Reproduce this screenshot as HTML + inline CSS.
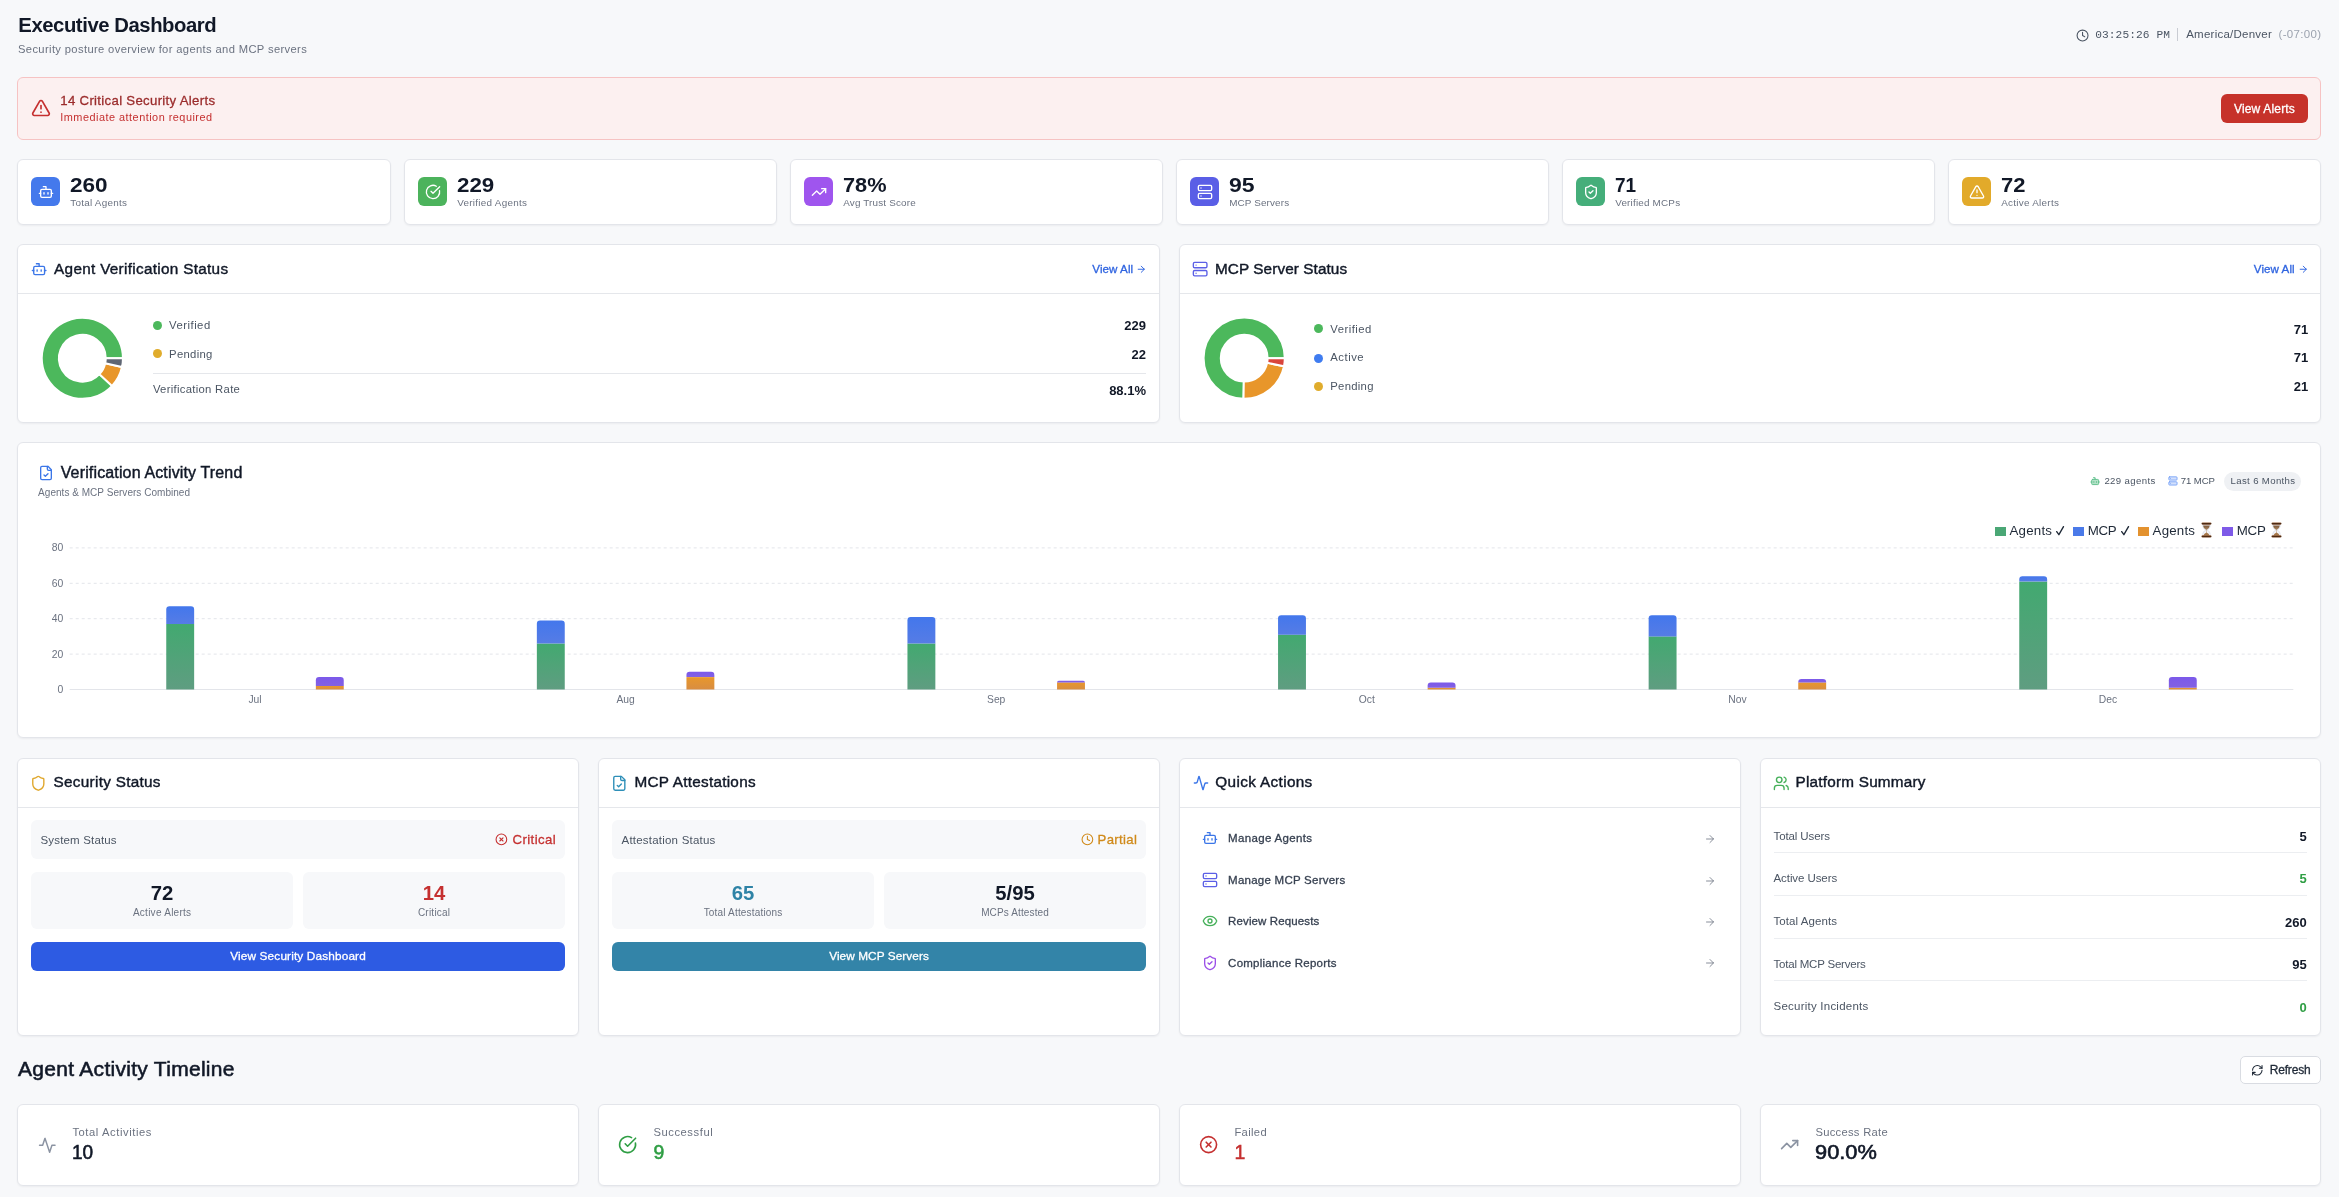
<!DOCTYPE html><html><head><meta charset="utf-8"><style>
*{margin:0;padding:0;box-sizing:border-box}
html,body{width:2339px;height:1197px;overflow:hidden;background:#f7f8fa;font-family:"Liberation Sans",sans-serif}
#root{position:absolute;left:0;top:0;width:2339px;height:1197px;will-change:transform}
.b{position:absolute}
.t{position:absolute;white-space:nowrap}
.ic{position:absolute;overflow:visible}
svg.abs{position:absolute;left:0;top:0}
</style></head><body><div id="root">
<span class="t" id="t0" style="left:18.30px;top:14.81px;font-size:20.3px;line-height:20.3px;font-weight:700;color:#111827;font-family:'Liberation Sans', sans-serif;letter-spacing:-0.437px;">Executive Dashboard</span>
<span class="t" id="t1" style="left:18.00px;top:44.32px;font-size:11.2px;line-height:11.2px;font-weight:400;color:#6b7280;font-family:'Liberation Sans', sans-serif;letter-spacing:0.363px;">Security posture overview for agents and MCP servers</span>
<svg class="ic" style="left:2075.60px;top:28.80px;width:13.1px;height:13.1px" viewBox="0 0 24 24" fill="none" stroke="#4b5563" stroke-width="2" stroke-linecap="round" stroke-linejoin="round"><circle cx="12" cy="12" r="10"/><polyline points="12 6 12 12 16 14"/></svg>
<span class="t" id="t2" style="left:2095.20px;top:29.62px;font-size:11.2px;line-height:11.2px;font-weight:400;color:#4b5563;font-family:'Liberation Mono', monospace;letter-spacing:0.092px;">03:25:26 PM</span>
<div class="b" style="left:2177.00px;top:28.30px;width:1.00px;height:13.00px;background:#c9ccd3"></div>
<span class="t" id="t3" style="left:2186.20px;top:29.36px;font-size:11.5px;line-height:11.5px;font-weight:400;color:#4b5563;font-family:'Liberation Sans', sans-serif;letter-spacing:0.242px;">America/Denver</span>
<span class="t" id="t4" style="left:2278.50px;top:29.36px;font-size:11.5px;line-height:11.5px;font-weight:400;color:#9ca3af;font-family:'Liberation Sans', sans-serif;letter-spacing:0.332px;">(-07:00)</span>
<div class="b" style="left:17.00px;top:77.00px;width:2304.00px;height:63.00px;background:#fcf0f0;border:1px solid #f6c3c3;border-radius:6px"></div>
<svg class="ic" style="left:30.60px;top:98.20px;width:20px;height:20px" viewBox="0 0 24 24" fill="none" stroke="#c53030" stroke-width="2" stroke-linecap="round" stroke-linejoin="round"><path d="m21.73 18-8-14a2 2 0 0 0-3.48 0l-8 14A2 2 0 0 0 4 21h16a2 2 0 0 0 1.73-3"/><path d="M12 9v4"/><path d="M12 17h.01"/></svg>
<span class="t" id="t5" style="left:60.30px;top:93.82px;font-size:13.2px;line-height:13.2px;font-weight:400;color:#9b2c2c;font-family:'Liberation Sans', sans-serif;letter-spacing:0.313px;-webkit-text-stroke:0.3px #9b2c2c;">14 Critical Security Alerts</span>
<span class="t" id="t6" style="left:60.30px;top:112.47px;font-size:10.9px;line-height:10.9px;font-weight:400;color:#c53030;font-family:'Liberation Sans', sans-serif;letter-spacing:0.486px;">Immediate attention required</span>
<div class="b" style="left:2221.00px;top:94.00px;width:87.00px;height:29.00px;background:#c6322a;border-radius:6px"></div>
<span class="t" id="t7" style="left:2264.40px;transform:translateX(-50%);top:102.74px;font-size:12.0px;line-height:12.0px;font-weight:400;color:#ffffff;font-family:'Liberation Sans', sans-serif;letter-spacing:0.170px;margin-left:0.085px;-webkit-text-stroke:0.3px #ffffff;">View Alerts</span>
<div class="b" style="left:17.00px;top:159.00px;width:374.00px;height:66.00px;background:#fff;border:1px solid #e3e5ea;border-radius:6px;box-shadow:0 1px 2px rgba(16,24,40,0.05);"></div>
<div class="b" style="left:31.00px;top:177.00px;width:29.00px;height:29.00px;background:#4479ec;border-radius:6px"></div>
<svg class="ic" style="left:37.50px;top:183.50px;width:16px;height:16px" viewBox="0 0 24 24" fill="none" stroke="#ffffff" stroke-width="2" stroke-linecap="round" stroke-linejoin="round"><path d="M12 8V4H8"/><rect width="16" height="12" x="4" y="8" rx="2"/><path d="M2 14h2"/><path d="M20 14h2"/><path d="M15 13v2"/><path d="M9 13v2"/></svg>
<span class="t" id="t8" style="left:70.20px;top:174.73px;font-size:20.4px;line-height:20.4px;font-weight:700;color:#111827;font-family:'Liberation Sans', sans-serif;transform:scaleX(1.1042);transform-origin:left center;">260</span>
<span class="t" id="t9" style="left:70.20px;top:198.42px;font-size:9.9px;line-height:9.9px;font-weight:400;color:#6b7280;font-family:'Liberation Sans', sans-serif;letter-spacing:0.271px;">Total Agents</span>
<div class="b" style="left:404.00px;top:159.00px;width:373.00px;height:66.00px;background:#fff;border:1px solid #e3e5ea;border-radius:6px;box-shadow:0 1px 2px rgba(16,24,40,0.05);"></div>
<div class="b" style="left:418.00px;top:177.00px;width:29.00px;height:29.00px;background:#4cb35c;border-radius:6px"></div>
<svg class="ic" style="left:424.50px;top:183.50px;width:16px;height:16px" viewBox="0 0 24 24" fill="none" stroke="#ffffff" stroke-width="2" stroke-linecap="round" stroke-linejoin="round"><path d="M21.801 10A10 10 0 1 1 17 3.335"/><path d="m9 11 3 3L22 4"/></svg>
<span class="t" id="t10" style="left:457.20px;top:174.73px;font-size:20.4px;line-height:20.4px;font-weight:700;color:#111827;font-family:'Liberation Sans', sans-serif;transform:scaleX(1.0950);transform-origin:left center;">229</span>
<span class="t" id="t11" style="left:457.20px;top:198.42px;font-size:9.9px;line-height:9.9px;font-weight:400;color:#6b7280;font-family:'Liberation Sans', sans-serif;letter-spacing:0.272px;">Verified Agents</span>
<div class="b" style="left:790.00px;top:159.00px;width:373.00px;height:66.00px;background:#fff;border:1px solid #e3e5ea;border-radius:6px;box-shadow:0 1px 2px rgba(16,24,40,0.05);"></div>
<div class="b" style="left:804.00px;top:177.00px;width:29.00px;height:29.00px;background:#9f55ee;border-radius:6px"></div>
<svg class="ic" style="left:810.50px;top:183.50px;width:16px;height:16px" viewBox="0 0 24 24" fill="none" stroke="#ffffff" stroke-width="2" stroke-linecap="round" stroke-linejoin="round"><polyline points="22 7 13.5 15.5 8.5 10.5 2 17"/><polyline points="16 7 22 7 22 13"/></svg>
<span class="t" id="t12" style="left:843.20px;top:174.73px;font-size:20.4px;line-height:20.4px;font-weight:700;color:#111827;font-family:'Liberation Sans', sans-serif;transform:scaleX(1.0664);transform-origin:left center;">78%</span>
<span class="t" id="t13" style="left:843.20px;top:198.42px;font-size:9.9px;line-height:9.9px;font-weight:400;color:#6b7280;font-family:'Liberation Sans', sans-serif;letter-spacing:0.172px;">Avg Trust Score</span>
<div class="b" style="left:1176.00px;top:159.00px;width:373.00px;height:66.00px;background:#fff;border:1px solid #e3e5ea;border-radius:6px;box-shadow:0 1px 2px rgba(16,24,40,0.05);"></div>
<div class="b" style="left:1190.00px;top:177.00px;width:29.00px;height:29.00px;background:#5a5ee6;border-radius:6px"></div>
<svg class="ic" style="left:1196.50px;top:183.50px;width:16px;height:16px" viewBox="0 0 24 24" fill="none" stroke="#ffffff" stroke-width="2" stroke-linecap="round" stroke-linejoin="round"><rect width="20" height="8" x="2" y="2" rx="2" ry="2"/><rect width="20" height="8" x="2" y="14" rx="2" ry="2"/><line x1="6" x2="6.01" y1="6" y2="6"/><line x1="6" x2="6.01" y1="18" y2="18"/></svg>
<span class="t" id="t14" style="left:1229.20px;top:174.73px;font-size:20.4px;line-height:20.4px;font-weight:700;color:#111827;font-family:'Liberation Sans', sans-serif;transform:scaleX(1.1289);transform-origin:left center;">95</span>
<span class="t" id="t15" style="left:1229.20px;top:198.42px;font-size:9.9px;line-height:9.9px;font-weight:400;color:#6b7280;font-family:'Liberation Sans', sans-serif;letter-spacing:0.135px;">MCP Servers</span>
<div class="b" style="left:1562.00px;top:159.00px;width:373.00px;height:66.00px;background:#fff;border:1px solid #e3e5ea;border-radius:6px;box-shadow:0 1px 2px rgba(16,24,40,0.05);"></div>
<div class="b" style="left:1576.00px;top:177.00px;width:29.00px;height:29.00px;background:#45ae7a;border-radius:6px"></div>
<svg class="ic" style="left:1582.50px;top:183.50px;width:16px;height:16px" viewBox="0 0 24 24" fill="none" stroke="#ffffff" stroke-width="2" stroke-linecap="round" stroke-linejoin="round"><path d="M20 13c0 5-3.5 7.5-7.66 8.95a1 1 0 0 1-.67-.01C7.5 20.5 4 18 4 13V6a1 1 0 0 1 1-1c2 0 4.5-1.2 6.24-2.72a1.17 1.17 0 0 1 1.520 0C14.51 3.810 17 5 19 5a1 1 0 0 1 1 1z"/><path d="m9 12 2 2 4-4"/></svg>
<span class="t" id="t16" style="left:1615.20px;top:174.73px;font-size:20.4px;line-height:20.4px;font-weight:700;color:#111827;font-family:'Liberation Sans', sans-serif;transform:scaleX(0.9313);transform-origin:left center;">71</span>
<span class="t" id="t17" style="left:1615.20px;top:198.42px;font-size:9.9px;line-height:9.9px;font-weight:400;color:#6b7280;font-family:'Liberation Sans', sans-serif;letter-spacing:0.194px;">Verified MCPs</span>
<div class="b" style="left:1948.00px;top:159.00px;width:373.00px;height:66.00px;background:#fff;border:1px solid #e3e5ea;border-radius:6px;box-shadow:0 1px 2px rgba(16,24,40,0.05);"></div>
<div class="b" style="left:1962.00px;top:177.00px;width:29.00px;height:29.00px;background:#e2aa2a;border-radius:6px"></div>
<svg class="ic" style="left:1968.50px;top:183.50px;width:16px;height:16px" viewBox="0 0 24 24" fill="none" stroke="#ffffff" stroke-width="2" stroke-linecap="round" stroke-linejoin="round"><path d="m21.73 18-8-14a2 2 0 0 0-3.48 0l-8 14A2 2 0 0 0 4 21h16a2 2 0 0 0 1.73-3"/><path d="M12 9v4"/><path d="M12 17h.01"/></svg>
<span class="t" id="t18" style="left:2001.20px;top:174.73px;font-size:20.4px;line-height:20.4px;font-weight:700;color:#111827;font-family:'Liberation Sans', sans-serif;transform:scaleX(1.0772);transform-origin:left center;">72</span>
<span class="t" id="t19" style="left:2001.20px;top:198.42px;font-size:9.9px;line-height:9.9px;font-weight:400;color:#6b7280;font-family:'Liberation Sans', sans-serif;letter-spacing:0.279px;">Active Alerts</span>
<div class="b" style="left:17.00px;top:244.00px;width:1143.00px;height:179.00px;background:#fff;border:1px solid #e3e5ea;border-radius:6px;box-shadow:0 1px 2px rgba(16,24,40,0.05);"></div>
<div class="b" style="left:18.00px;top:293.00px;width:1141.00px;height:1.00px;background:#e5e7eb"></div>
<div class="b" style="left:1179.00px;top:244.00px;width:1142.00px;height:179.00px;background:#fff;border:1px solid #e3e5ea;border-radius:6px;box-shadow:0 1px 2px rgba(16,24,40,0.05);"></div>
<div class="b" style="left:1180.00px;top:293.00px;width:1140.00px;height:1.00px;background:#e5e7eb"></div>
<svg class="ic" style="left:30.60px;top:261.00px;width:16.3px;height:16.3px" viewBox="0 0 24 24" fill="none" stroke="#3b76e8" stroke-width="2" stroke-linecap="round" stroke-linejoin="round"><path d="M12 8V4H8"/><rect width="16" height="12" x="4" y="8" rx="2"/><path d="M2 14h2"/><path d="M20 14h2"/><path d="M15 13v2"/><path d="M9 13v2"/></svg>
<span class="t" id="t20" style="left:54.10px;top:261.15px;font-size:15.3px;line-height:15.3px;font-weight:400;color:#111827;font-family:'Liberation Sans', sans-serif;letter-spacing:0.304px;-webkit-text-stroke:0.41px #111827;">Agent Verification Status</span>
<span class="t" id="t21" style="left:1092.30px;top:263.28px;font-size:11.6px;line-height:11.6px;font-weight:400;color:#2f64e0;font-family:'Liberation Sans', sans-serif;letter-spacing:0.060px;-webkit-text-stroke:0.3px #2f64e0;">View All</span>
<svg class="ic" style="left:1136.00px;top:263.50px;width:10.5px;height:10.5px" viewBox="0 0 24 24" fill="none" stroke="#2f64e0" stroke-width="2.2" stroke-linecap="round" stroke-linejoin="round"><path d="M5 12h14"/><path d="m12 5 7 7-7 7"/></svg>
<svg class="abs" width="2339" height="1197" style="position:absolute;left:0;top:0"><path d="M122.950,358.250 A40.6,40.6 0 1 0 112.080,385.899 L99.485,374.186 A23.4,23.4 0 1 1 105.750,358.250 Z" fill="#4cb85c" stroke="#fff" stroke-width="2.0"/><path d="M112.080,385.899 A40.6,40.6 0 0 0 121.994,367.011 L105.199,363.299 A23.4,23.4 0 0 1 99.485,374.186 Z" fill="#e8962a" stroke="#fff" stroke-width="2.0"/><path d="M121.994,367.011 A40.6,40.6 0 0 0 122.950,358.250 L105.750,358.250 A23.4,23.4 0 0 1 105.199,363.299 Z" fill="#5f6673" stroke="#fff" stroke-width="2.0"/></svg>
<div class="b" style="left:153.00px;top:320.90px;width:9.00px;height:9.00px;background:#4cb85c;border-radius:50%"></div>
<span class="t" id="t22" style="left:169.10px;top:319.93px;font-size:11.3px;line-height:11.3px;font-weight:400;color:#4b5563;font-family:'Liberation Sans', sans-serif;letter-spacing:0.486px;">Verified</span>
<span class="t" id="t23" style="right:1193.00px;top:318.79px;font-size:13.0px;line-height:13.0px;font-weight:700;color:#111827;font-family:'Liberation Sans', sans-serif;">229</span>
<div class="b" style="left:153.00px;top:349.40px;width:9.00px;height:9.00px;background:#e0ac2c;border-radius:50%"></div>
<span class="t" id="t24" style="left:169.10px;top:348.73px;font-size:11.3px;line-height:11.3px;font-weight:400;color:#4b5563;font-family:'Liberation Sans', sans-serif;letter-spacing:0.287px;">Pending</span>
<span class="t" id="t25" style="right:1193.00px;top:347.59px;font-size:13.0px;line-height:13.0px;font-weight:700;color:#111827;font-family:'Liberation Sans', sans-serif;">22</span>
<div class="b" style="left:153.00px;top:373.00px;width:992.80px;height:1.00px;background:#e5e7eb"></div>
<span class="t" id="t26" style="left:152.90px;top:384.33px;font-size:11.3px;line-height:11.3px;font-weight:400;color:#4b5563;font-family:'Liberation Sans', sans-serif;letter-spacing:0.295px;">Verification Rate</span>
<span class="t" id="t27" style="right:1193.00px;top:383.99px;font-size:13.0px;line-height:13.0px;font-weight:700;color:#111827;font-family:'Liberation Sans', sans-serif;">88.1%</span>
<svg class="ic" style="left:1191.90px;top:260.60px;width:16.3px;height:16.3px" viewBox="0 0 24 24" fill="none" stroke="#5b5fe6" stroke-width="2" stroke-linecap="round" stroke-linejoin="round"><rect width="20" height="8" x="2" y="2" rx="2" ry="2"/><rect width="20" height="8" x="2" y="14" rx="2" ry="2"/><line x1="6" x2="6.01" y1="6" y2="6"/><line x1="6" x2="6.01" y1="18" y2="18"/></svg>
<span class="t" id="t28" style="left:1215.00px;top:261.15px;font-size:15.3px;line-height:15.3px;font-weight:400;color:#111827;font-family:'Liberation Sans', sans-serif;letter-spacing:0.089px;-webkit-text-stroke:0.41px #111827;">MCP Server Status</span>
<span class="t" id="t29" style="left:2253.80px;top:263.28px;font-size:11.6px;line-height:11.6px;font-weight:400;color:#2f64e0;font-family:'Liberation Sans', sans-serif;letter-spacing:0.060px;-webkit-text-stroke:0.3px #2f64e0;">View All</span>
<svg class="ic" style="left:2297.50px;top:263.50px;width:10.5px;height:10.5px" viewBox="0 0 24 24" fill="none" stroke="#2f64e0" stroke-width="2.2" stroke-linecap="round" stroke-linejoin="round"><path d="M5 12h14"/><path d="m12 5 7 7-7 7"/></svg>
<svg class="abs" width="2339" height="1197" style="position:absolute;left:0;top:0"><path d="M1284.800,358.200 A40.6,40.6 0 1 0 1243.529,398.794 L1243.813,381.597 A23.4,23.4 0 1 1 1267.600,358.200 Z" fill="#4cb85c" stroke="#fff" stroke-width="2.0"/><path d="M1243.529,398.794 A40.6,40.6 0 0 0 1284.003,366.203 L1267.141,362.813 A23.4,23.4 0 0 1 1243.813,381.597 Z" fill="#e8962a" stroke="#fff" stroke-width="2.0"/><path d="M1284.003,366.203 A40.6,40.6 0 0 0 1284.800,358.200 L1267.600,358.200 A23.4,23.4 0 0 1 1267.141,362.813 Z" fill="#d9443b" stroke="#fff" stroke-width="2.0"/></svg>
<div class="b" style="left:1314.20px;top:324.20px;width:9.00px;height:9.00px;background:#4cb85c;border-radius:50%"></div>
<span class="t" id="t30" style="left:1330.30px;top:323.53px;font-size:11.3px;line-height:11.3px;font-weight:400;color:#4b5563;font-family:'Liberation Sans', sans-serif;letter-spacing:0.486px;">Verified</span>
<span class="t" id="t31" style="right:30.70px;top:322.69px;font-size:13.0px;line-height:13.0px;font-weight:700;color:#111827;font-family:'Liberation Sans', sans-serif;">71</span>
<div class="b" style="left:1314.20px;top:353.50px;width:9.00px;height:9.00px;background:#3f7cf0;border-radius:50%"></div>
<span class="t" id="t32" style="left:1330.30px;top:351.63px;font-size:11.3px;line-height:11.3px;font-weight:400;color:#4b5563;font-family:'Liberation Sans', sans-serif;letter-spacing:0.505px;">Active</span>
<span class="t" id="t33" style="right:30.70px;top:350.79px;font-size:13.0px;line-height:13.0px;font-weight:700;color:#111827;font-family:'Liberation Sans', sans-serif;">71</span>
<div class="b" style="left:1314.20px;top:382.40px;width:9.00px;height:9.00px;background:#e0ac2c;border-radius:50%"></div>
<span class="t" id="t34" style="left:1330.30px;top:380.63px;font-size:11.3px;line-height:11.3px;font-weight:400;color:#4b5563;font-family:'Liberation Sans', sans-serif;letter-spacing:0.287px;">Pending</span>
<span class="t" id="t35" style="right:30.70px;top:379.79px;font-size:13.0px;line-height:13.0px;font-weight:700;color:#111827;font-family:'Liberation Sans', sans-serif;">21</span>
<div class="b" style="left:17.00px;top:442.00px;width:2304.00px;height:296.00px;background:#fff;border:1px solid #e3e5ea;border-radius:6px;box-shadow:0 1px 2px rgba(16,24,40,0.05);"></div>
<svg class="ic" style="left:37.80px;top:464.90px;width:16px;height:16px" viewBox="0 0 24 24" fill="none" stroke="#3b76e8" stroke-width="2" stroke-linecap="round" stroke-linejoin="round"><path d="M15 2H6a2 2 0 0 0-2 2v16a2 2 0 0 0 2 2h12a2 2 0 0 0 2-2V7Z"/><path d="M14 2v4a2 2 0 0 0 2 2h4"/><path d="m9 15 2 2 4-4"/></svg>
<span class="t" id="t36" style="left:60.70px;top:464.75px;font-size:16.0px;line-height:16.0px;font-weight:400;color:#111827;font-family:'Liberation Sans', sans-serif;letter-spacing:0.145px;-webkit-text-stroke:0.43px #111827;">Verification Activity Trend</span>
<span class="t" id="t37" style="left:38.10px;top:488.33px;font-size:10.0px;line-height:10.0px;font-weight:400;color:#6b7280;font-family:'Liberation Sans', sans-serif;letter-spacing:0.032px;">Agents &amp; MCP Servers Combined</span>
<svg class="ic" style="left:2090.30px;top:476.30px;width:10.3px;height:10.3px" viewBox="0 0 24 24" fill="#b4e2c8" stroke="#5fbf8b" stroke-width="2.2" stroke-linecap="round" stroke-linejoin="round"><path d="M12 8V4H8"/><rect width="16" height="12" x="4" y="8" rx="2"/><path d="M2 14h2"/><path d="M20 14h2"/><path d="M15 13v2"/><path d="M9 13v2"/></svg>
<span class="t" id="t38" style="left:2104.40px;top:476.27px;font-size:9.6px;line-height:9.6px;font-weight:400;color:#4b5563;font-family:'Liberation Sans', sans-serif;letter-spacing:0.388px;">229 agents</span>
<svg class="ic" style="left:2167.60px;top:476.30px;width:9.9px;height:9.9px" viewBox="0 0 24 24" fill="#d3e0fc" stroke="#6e9cf6" stroke-width="2" stroke-linecap="round" stroke-linejoin="round"><rect width="20" height="8" x="2" y="2" rx="2" ry="2"/><rect width="20" height="8" x="2" y="14" rx="2" ry="2"/><line x1="6" x2="6.01" y1="6" y2="6"/><line x1="6" x2="6.01" y1="18" y2="18"/></svg>
<span class="t" id="t39" style="left:2180.80px;top:476.27px;font-size:9.6px;line-height:9.6px;font-weight:400;color:#4b5563;font-family:'Liberation Sans', sans-serif;letter-spacing:-0.117px;">71 MCP</span>
<div class="b" style="left:2224.00px;top:472.10px;width:76.70px;height:18.70px;background:#eff1f4;border-radius:9.5px"></div>
<span class="t" id="t40" style="left:2230.60px;top:476.27px;font-size:9.6px;line-height:9.6px;font-weight:400;color:#4b5563;font-family:'Liberation Sans', sans-serif;letter-spacing:0.351px;">Last 6 Months</span>
<div class="b" style="left:1995.00px;top:527.20px;width:11.20px;height:8.50px;background:#4aa775"></div>
<span class="t" id="t41" style="left:2009.40px;top:523.74px;font-size:13.3px;line-height:13.3px;font-weight:400;color:#1f2937;font-family:'Liberation Sans', sans-serif;letter-spacing:0.245px;">Agents</span>
<svg class="ic" style="left:2055.90px;top:525.60px;width:8px;height:9.5px" viewBox="0 0 8 9.5"><path d="M0.7 5.6 L2.9 8.7 L7.5 0.6" fill="none" stroke="#1f2937" stroke-width="1.35" stroke-linecap="round" stroke-linejoin="round"/></svg>
<div class="b" style="left:2073.00px;top:527.20px;width:11.20px;height:8.50px;background:#4a7ae9"></div>
<span class="t" id="t42" style="left:2087.70px;top:523.74px;font-size:13.3px;line-height:13.3px;font-weight:400;color:#1f2937;font-family:'Liberation Sans', sans-serif;letter-spacing:-0.266px;">MCP</span>
<svg class="ic" style="left:2120.90px;top:525.60px;width:8px;height:9.5px" viewBox="0 0 8 9.5"><path d="M0.7 5.6 L2.9 8.7 L7.5 0.6" fill="none" stroke="#1f2937" stroke-width="1.35" stroke-linecap="round" stroke-linejoin="round"/></svg>
<div class="b" style="left:2138.00px;top:527.20px;width:11.20px;height:8.50px;background:#e3922f"></div>
<span class="t" id="t43" style="left:2152.60px;top:523.74px;font-size:13.3px;line-height:13.3px;font-weight:400;color:#1f2937;font-family:'Liberation Sans', sans-serif;letter-spacing:0.185px;">Agents</span>
<svg class="ic" style="left:2200.50px;top:522.00px;width:11px;height:16px" viewBox="0 0 11 16"><defs><linearGradient id="hgCap" x1="0" y1="0" x2="0" y2="1"><stop offset="0" stop-color="#9a6238"/><stop offset="0.5" stop-color="#4a2710"/><stop offset="1" stop-color="#7a4522"/></linearGradient><linearGradient id="hgSand" x1="0" y1="0" x2="0" y2="1"><stop offset="0" stop-color="#7d5a3c"/><stop offset="1" stop-color="#b08a62"/></linearGradient></defs><path d="M1.8 2.2 L9.2 2.2 L9.2 4.2 Q9.2 6.6 5.9 8 Q9.2 9.4 9.2 11.8 L9.2 13.8 L1.8 13.8 L1.8 11.8 Q1.8 9.4 5.1 8 Q1.8 6.6 1.8 4.2 Z" fill="#f3f5fa" stroke="#c9cfdc" stroke-width="0.5"/><path d="M2.2 3.6 L8.8 3.6 Q8.8 6.2 5.5 7.9 Q2.2 6.2 2.2 3.6 Z" fill="url(#hgSand)"/><path d="M5.5 7.9 L5.5 12" stroke="#b89876" stroke-width="0.5"/><path d="M2.4 13.8 L8.6 13.8 Q8 11.6 5.5 10.6 Q3 11.6 2.4 13.8 Z" fill="#a6784a"/><rect x="0.5" y="0.4" width="10" height="2.3" rx="1.15" fill="url(#hgCap)"/><rect x="0.5" y="13.3" width="10" height="2.3" rx="1.15" fill="url(#hgCap)"/></svg>
<div class="b" style="left:2222.00px;top:527.20px;width:11.20px;height:8.50px;background:#7e5ae8"></div>
<span class="t" id="t44" style="left:2236.80px;top:523.74px;font-size:13.3px;line-height:13.3px;font-weight:400;color:#1f2937;font-family:'Liberation Sans', sans-serif;letter-spacing:-0.266px;">MCP</span>
<svg class="ic" style="left:2271.20px;top:522.00px;width:11px;height:16px" viewBox="0 0 11 16"><defs><linearGradient id="hgCap" x1="0" y1="0" x2="0" y2="1"><stop offset="0" stop-color="#9a6238"/><stop offset="0.5" stop-color="#4a2710"/><stop offset="1" stop-color="#7a4522"/></linearGradient><linearGradient id="hgSand" x1="0" y1="0" x2="0" y2="1"><stop offset="0" stop-color="#7d5a3c"/><stop offset="1" stop-color="#b08a62"/></linearGradient></defs><path d="M1.8 2.2 L9.2 2.2 L9.2 4.2 Q9.2 6.6 5.9 8 Q9.2 9.4 9.2 11.8 L9.2 13.8 L1.8 13.8 L1.8 11.8 Q1.8 9.4 5.1 8 Q1.8 6.6 1.8 4.2 Z" fill="#f3f5fa" stroke="#c9cfdc" stroke-width="0.5"/><path d="M2.2 3.6 L8.8 3.6 Q8.8 6.2 5.5 7.9 Q2.2 6.2 2.2 3.6 Z" fill="url(#hgSand)"/><path d="M5.5 7.9 L5.5 12" stroke="#b89876" stroke-width="0.5"/><path d="M2.4 13.8 L8.6 13.8 Q8 11.6 5.5 10.6 Q3 11.6 2.4 13.8 Z" fill="#a6784a"/><rect x="0.5" y="0.4" width="10" height="2.3" rx="1.15" fill="url(#hgCap)"/><rect x="0.5" y="13.3" width="10" height="2.3" rx="1.15" fill="url(#hgCap)"/></svg>
<span class="t" id="t45" style="right:2275.70px;top:685.09px;font-size:10.4px;line-height:10.4px;font-weight:400;color:#6b7280;font-family:'Liberation Sans', sans-serif;">0</span>
<span class="t" id="t46" style="right:2275.70px;top:649.69px;font-size:10.4px;line-height:10.4px;font-weight:400;color:#6b7280;font-family:'Liberation Sans', sans-serif;">20</span>
<span class="t" id="t47" style="right:2275.70px;top:614.29px;font-size:10.4px;line-height:10.4px;font-weight:400;color:#6b7280;font-family:'Liberation Sans', sans-serif;">40</span>
<span class="t" id="t48" style="right:2275.70px;top:578.89px;font-size:10.4px;line-height:10.4px;font-weight:400;color:#6b7280;font-family:'Liberation Sans', sans-serif;">60</span>
<span class="t" id="t49" style="right:2275.70px;top:543.49px;font-size:10.4px;line-height:10.4px;font-weight:400;color:#6b7280;font-family:'Liberation Sans', sans-serif;">80</span>
<span class="t" id="t50" style="left:255.00px;transform:translateX(-50%);top:695.28px;font-size:10.3px;line-height:10.3px;font-weight:400;color:#6b7280;font-family:'Liberation Sans', sans-serif;">Jul</span>
<span class="t" id="t51" style="left:625.60px;transform:translateX(-50%);top:695.28px;font-size:10.3px;line-height:10.3px;font-weight:400;color:#6b7280;font-family:'Liberation Sans', sans-serif;">Aug</span>
<span class="t" id="t52" style="left:996.20px;transform:translateX(-50%);top:695.28px;font-size:10.3px;line-height:10.3px;font-weight:400;color:#6b7280;font-family:'Liberation Sans', sans-serif;">Sep</span>
<span class="t" id="t53" style="left:1366.80px;transform:translateX(-50%);top:695.28px;font-size:10.3px;line-height:10.3px;font-weight:400;color:#6b7280;font-family:'Liberation Sans', sans-serif;">Oct</span>
<span class="t" id="t54" style="left:1737.40px;transform:translateX(-50%);top:695.28px;font-size:10.3px;line-height:10.3px;font-weight:400;color:#6b7280;font-family:'Liberation Sans', sans-serif;">Nov</span>
<span class="t" id="t55" style="left:2108.00px;transform:translateX(-50%);top:695.28px;font-size:10.3px;line-height:10.3px;font-weight:400;color:#6b7280;font-family:'Liberation Sans', sans-serif;">Dec</span>
<svg class="abs" width="2339" height="1197" style="position:absolute;left:0;top:0"><defs><linearGradient id="gG" x1="0" y1="0" x2="0" y2="1"><stop offset="0" stop-color="#42a970"/><stop offset="1" stop-color="#5f9d81"/></linearGradient><linearGradient id="gB" x1="0" y1="0" x2="0" y2="1"><stop offset="0" stop-color="#4377ec"/><stop offset="1" stop-color="#567ce5"/></linearGradient><linearGradient id="gO" x1="0" y1="0" x2="0" y2="1"><stop offset="0" stop-color="#e8972b"/><stop offset="1" stop-color="#d88d42"/></linearGradient><linearGradient id="gP" x1="0" y1="0" x2="0" y2="1"><stop offset="0" stop-color="#7b59ea"/><stop offset="1" stop-color="#8361e2"/></linearGradient></defs><line x1="69.7" y1="654.10" x2="2293.3" y2="654.10" stroke="#e3e5ea" stroke-width="1" stroke-dasharray="3 3"/><line x1="69.7" y1="618.70" x2="2293.3" y2="618.70" stroke="#e3e5ea" stroke-width="1" stroke-dasharray="3 3"/><line x1="69.7" y1="583.30" x2="2293.3" y2="583.30" stroke="#e3e5ea" stroke-width="1" stroke-dasharray="3 3"/><line x1="69.7" y1="547.90" x2="2293.3" y2="547.90" stroke="#e3e5ea" stroke-width="1" stroke-dasharray="3 3"/><line x1="69.7" y1="689.50" x2="2293.3" y2="689.50" stroke="#e3e5ea" stroke-width="1"/><rect x="166.25" y="624.01" width="27.9" height="65.49" fill="url(#gG)"/><path d="M166.25,624.01 L166.25,609.51 Q166.25,606.31 169.45,606.31 L190.95,606.31 Q194.15,606.31 194.15,609.51 L194.15,624.01 Z" fill="url(#gB)"/><rect x="315.85" y="685.96" width="27.9" height="3.54" fill="url(#gO)"/><path d="M315.85,685.96 L315.85,680.31 Q315.85,677.11 319.05,677.11 L340.55,677.11 Q343.75,677.11 343.75,680.31 L343.75,685.96 Z" fill="url(#gP)"/><rect x="536.85" y="643.48" width="27.9" height="46.02" fill="url(#gG)"/><path d="M536.85,643.48 L536.85,623.67 Q536.85,620.47 540.05,620.47 L561.55,620.47 Q564.75,620.47 564.75,623.67 L564.75,643.48 Z" fill="url(#gB)"/><rect x="686.45" y="677.11" width="27.9" height="12.39" fill="url(#gO)"/><path d="M686.45,677.11 L686.45,675.00 Q686.45,671.80 689.65,671.80 L711.15,671.80 Q714.35,671.80 714.35,675.00 L714.35,677.11 Z" fill="url(#gP)"/><rect x="907.45" y="643.48" width="27.9" height="46.02" fill="url(#gG)"/><path d="M907.45,643.48 L907.45,620.13 Q907.45,616.93 910.65,616.93 L932.15,616.93 Q935.35,616.93 935.35,620.13 L935.35,643.48 Z" fill="url(#gB)"/><rect x="1057.05" y="682.42" width="27.9" height="7.08" fill="url(#gO)"/><path d="M1057.05,682.42 L1057.05,682.42 Q1057.05,680.65 1058.82,680.65 L1083.18,680.65 Q1084.95,680.65 1084.95,682.42 L1084.95,682.42 Z" fill="url(#gP)"/><rect x="1278.05" y="634.63" width="27.9" height="54.87" fill="url(#gG)"/><path d="M1278.05,634.63 L1278.05,618.36 Q1278.05,615.16 1281.25,615.16 L1302.75,615.16 Q1305.95,615.16 1305.95,618.36 L1305.95,634.63 Z" fill="url(#gB)"/><rect x="1427.65" y="687.73" width="27.9" height="1.77" fill="url(#gO)"/><path d="M1427.65,687.73 L1427.65,685.62 Q1427.65,682.42 1430.85,682.42 L1452.35,682.42 Q1455.55,682.42 1455.55,685.62 L1455.55,687.73 Z" fill="url(#gP)"/><rect x="1648.65" y="636.40" width="27.9" height="53.10" fill="url(#gG)"/><path d="M1648.65,636.40 L1648.65,618.36 Q1648.65,615.16 1651.85,615.16 L1673.35,615.16 Q1676.55,615.16 1676.55,618.36 L1676.55,636.40 Z" fill="url(#gB)"/><rect x="1798.25" y="682.42" width="27.9" height="7.08" fill="url(#gO)"/><path d="M1798.25,682.42 L1798.25,682.08 Q1798.25,678.88 1801.45,678.88 L1822.95,678.88 Q1826.15,678.88 1826.15,682.08 L1826.15,682.42 Z" fill="url(#gP)"/><rect x="2019.25" y="581.53" width="27.9" height="107.97" fill="url(#gG)"/><path d="M2019.25,581.53 L2019.25,579.42 Q2019.25,576.22 2022.45,576.22 L2043.95,576.22 Q2047.15,576.22 2047.15,579.42 L2047.15,581.53 Z" fill="url(#gB)"/><rect x="2168.85" y="687.73" width="27.9" height="1.77" fill="url(#gO)"/><path d="M2168.85,687.73 L2168.85,680.31 Q2168.85,677.11 2172.05,677.11 L2193.55,677.11 Q2196.75,677.11 2196.75,680.31 L2196.75,687.73 Z" fill="url(#gP)"/></svg>
<div class="b" style="left:17.00px;top:758.00px;width:562.00px;height:278.00px;background:#fff;border:1px solid #e3e5ea;border-radius:6px;box-shadow:0 1px 2px rgba(16,24,40,0.05);"></div>
<div class="b" style="left:18.00px;top:807.00px;width:560.00px;height:1.00px;background:#e5e7eb"></div>
<div class="b" style="left:598.00px;top:758.00px;width:562.00px;height:278.00px;background:#fff;border:1px solid #e3e5ea;border-radius:6px;box-shadow:0 1px 2px rgba(16,24,40,0.05);"></div>
<div class="b" style="left:599.00px;top:807.00px;width:560.00px;height:1.00px;background:#e5e7eb"></div>
<div class="b" style="left:1179.00px;top:758.00px;width:562.00px;height:278.00px;background:#fff;border:1px solid #e3e5ea;border-radius:6px;box-shadow:0 1px 2px rgba(16,24,40,0.05);"></div>
<div class="b" style="left:1180.00px;top:807.00px;width:560.00px;height:1.00px;background:#e5e7eb"></div>
<div class="b" style="left:1760.00px;top:758.00px;width:561.00px;height:278.00px;background:#fff;border:1px solid #e3e5ea;border-radius:6px;box-shadow:0 1px 2px rgba(16,24,40,0.05);"></div>
<div class="b" style="left:1761.00px;top:807.00px;width:559.00px;height:1.00px;background:#e5e7eb"></div>
<svg class="ic" style="left:30.20px;top:774.80px;width:16.6px;height:16.6px" viewBox="0 0 24 24" fill="none" stroke="#e0a82e" stroke-width="2" stroke-linecap="round" stroke-linejoin="round"><path d="M20 13c0 5-3.5 7.5-7.66 8.95a1 1 0 0 1-.67-.01C7.5 20.5 4 18 4 13V6a1 1 0 0 1 1-1c2 0 4.5-1.2 6.24-2.72a1.17 1.17 0 0 1 1.52 0C14.51 3.81 17 5 19 5a1 1 0 0 1 1 1z"/></svg>
<span class="t" id="t56" style="left:53.60px;top:774.05px;font-size:15.3px;line-height:15.3px;font-weight:400;color:#111827;font-family:'Liberation Sans', sans-serif;letter-spacing:0.285px;-webkit-text-stroke:0.41px #111827;">Security Status</span>
<div class="b" style="left:31.00px;top:820.00px;width:534.00px;height:39.00px;background:#f7f8fa;border-radius:6px"></div>
<span class="t" id="t57" style="left:40.50px;top:834.66px;font-size:11.5px;line-height:11.5px;font-weight:400;color:#4b5563;font-family:'Liberation Sans', sans-serif;letter-spacing:0.164px;">System Status</span>
<svg class="ic" style="left:495.40px;top:832.77px;width:12.8px;height:12.8px" viewBox="0 0 24 24" fill="none" stroke="#c53030" stroke-width="2" stroke-linecap="round" stroke-linejoin="round"><circle cx="12" cy="12" r="10"/><path d="m15 9-6 6"/><path d="m9 9 6 6"/></svg>
<span class="t" id="t58" style="left:512.50px;top:833.02px;font-size:13.2px;line-height:13.2px;font-weight:400;color:#c53030;font-family:'Liberation Sans', sans-serif;letter-spacing:0.418px;-webkit-text-stroke:0.3px #c53030;">Critical</span>
<div class="b" style="left:31.00px;top:872.00px;width:262.00px;height:57.00px;background:#f7f8fa;border-radius:6px"></div>
<span class="t" id="t59" style="left:162.00px;transform:translateX(-50%);top:882.81px;font-size:20.3px;line-height:20.3px;font-weight:700;color:#111827;font-family:'Liberation Sans', sans-serif;">72</span>
<span class="t" id="t60" style="left:162.00px;transform:translateX(-50%);top:907.53px;font-size:10.0px;line-height:10.0px;font-weight:400;color:#6b7280;font-family:'Liberation Sans', sans-serif;letter-spacing:0.264px;margin-left:0.132px;">Active Alerts</span>
<div class="b" style="left:303.00px;top:872.00px;width:262.00px;height:57.00px;background:#f7f8fa;border-radius:6px"></div>
<span class="t" id="t61" style="left:434.00px;transform:translateX(-50%);top:882.81px;font-size:20.3px;line-height:20.3px;font-weight:700;color:#c53030;font-family:'Liberation Sans', sans-serif;">14</span>
<span class="t" id="t62" style="left:434.00px;transform:translateX(-50%);top:907.53px;font-size:10.0px;line-height:10.0px;font-weight:400;color:#6b7280;font-family:'Liberation Sans', sans-serif;letter-spacing:0.234px;margin-left:0.117px;">Critical</span>
<div class="b" style="left:31.00px;top:942.00px;width:534.00px;height:29.00px;background:#2d5be3;border-radius:6px"></div>
<span class="t" id="t63" style="left:298.00px;transform:translateX(-50%);top:951.01px;font-size:11.8px;line-height:11.8px;font-weight:400;color:#ffffff;font-family:'Liberation Sans', sans-serif;letter-spacing:0.149px;margin-left:0.074px;-webkit-text-stroke:0.3px #ffffff;">View Security Dashboard</span>
<svg class="ic" style="left:611.20px;top:774.80px;width:16.6px;height:16.6px" viewBox="0 0 24 24" fill="none" stroke="#2e8fb8" stroke-width="2" stroke-linecap="round" stroke-linejoin="round"><path d="M15 2H6a2 2 0 0 0-2 2v16a2 2 0 0 0 2 2h12a2 2 0 0 0 2-2V7Z"/><path d="M14 2v4a2 2 0 0 0 2 2h4"/><path d="m9 15 2 2 4-4"/></svg>
<span class="t" id="t64" style="left:634.50px;top:774.05px;font-size:15.3px;line-height:15.3px;font-weight:400;color:#111827;font-family:'Liberation Sans', sans-serif;letter-spacing:0.267px;-webkit-text-stroke:0.41px #111827;">MCP Attestations</span>
<div class="b" style="left:612.00px;top:820.00px;width:534.00px;height:39.00px;background:#f7f8fa;border-radius:6px"></div>
<span class="t" id="t65" style="left:621.50px;top:834.66px;font-size:11.5px;line-height:11.5px;font-weight:400;color:#4b5563;font-family:'Liberation Sans', sans-serif;letter-spacing:0.216px;">Attestation Status</span>
<svg class="ic" style="left:1081.00px;top:832.77px;width:12.8px;height:12.8px" viewBox="0 0 24 24" fill="none" stroke="#d08a1a" stroke-width="2" stroke-linecap="round" stroke-linejoin="round"><circle cx="12" cy="12" r="10"/><polyline points="12 6 12 12 16 14"/></svg>
<span class="t" id="t66" style="left:1097.60px;top:833.02px;font-size:13.2px;line-height:13.2px;font-weight:400;color:#d08a1a;font-family:'Liberation Sans', sans-serif;letter-spacing:0.322px;-webkit-text-stroke:0.3px #d08a1a;">Partial</span>
<div class="b" style="left:612.00px;top:872.00px;width:262.00px;height:57.00px;background:#f7f8fa;border-radius:6px"></div>
<span class="t" id="t67" style="left:743.00px;transform:translateX(-50%);top:882.81px;font-size:20.3px;line-height:20.3px;font-weight:700;color:#2e83a6;font-family:'Liberation Sans', sans-serif;">65</span>
<span class="t" id="t68" style="left:743.00px;transform:translateX(-50%);top:907.53px;font-size:10.0px;line-height:10.0px;font-weight:400;color:#6b7280;font-family:'Liberation Sans', sans-serif;letter-spacing:0.182px;margin-left:0.091px;">Total Attestations</span>
<div class="b" style="left:884.00px;top:872.00px;width:262.00px;height:57.00px;background:#f7f8fa;border-radius:6px"></div>
<span class="t" id="t69" style="left:1015.00px;transform:translateX(-50%);top:882.81px;font-size:20.3px;line-height:20.3px;font-weight:700;color:#111827;font-family:'Liberation Sans', sans-serif;">5/95</span>
<span class="t" id="t70" style="left:1015.00px;transform:translateX(-50%);top:907.53px;font-size:10.0px;line-height:10.0px;font-weight:400;color:#6b7280;font-family:'Liberation Sans', sans-serif;letter-spacing:0.130px;margin-left:0.065px;">MCPs Attested</span>
<div class="b" style="left:612.00px;top:942.00px;width:534.00px;height:29.00px;background:#3384a8;border-radius:6px"></div>
<span class="t" id="t71" style="left:879.00px;transform:translateX(-50%);top:951.01px;font-size:11.8px;line-height:11.8px;font-weight:400;color:#ffffff;font-family:'Liberation Sans', sans-serif;letter-spacing:0.071px;margin-left:0.035px;-webkit-text-stroke:0.3px #ffffff;">View MCP Servers</span>
<svg class="ic" style="left:1192.50px;top:774.60px;width:16.0px;height:16.0px" viewBox="0 0 24 24" fill="none" stroke="#3b76e8" stroke-width="2" stroke-linecap="round" stroke-linejoin="round"><path d="M22 12h-2.48a2 2 0 0 0-1.93 1.46l-2.35 8.36a.25.25 0 0 1-.48 0L9.24 2.18a.25.25 0 0 0-.48 0l-2.35 8.36A2 2 0 0 1 4.49 12H2"/></svg>
<span class="t" id="t72" style="left:1215.30px;top:774.05px;font-size:15.3px;line-height:15.3px;font-weight:400;color:#111827;font-family:'Liberation Sans', sans-serif;letter-spacing:0.358px;-webkit-text-stroke:0.41px #111827;">Quick Actions</span>
<svg class="ic" style="left:1202.20px;top:830.10px;width:16.0px;height:16.0px" viewBox="0 0 24 24" fill="none" stroke="#3b76e8" stroke-width="2" stroke-linecap="round" stroke-linejoin="round"><path d="M12 8V4H8"/><rect width="16" height="12" x="4" y="8" rx="2"/><path d="M2 14h2"/><path d="M20 14h2"/><path d="M15 13v2"/><path d="M9 13v2"/></svg>
<span class="t" id="t73" style="left:1228.10px;top:832.66px;font-size:11.5px;line-height:11.5px;font-weight:400;color:#374151;font-family:'Liberation Sans', sans-serif;letter-spacing:0.332px;-webkit-text-stroke:0.3px #374151;">Manage Agents</span>
<svg class="ic" style="left:1704.30px;top:832.50px;width:12.0px;height:12.0px" viewBox="0 0 24 24" fill="none" stroke="#6b7280" stroke-width="1.6" stroke-linecap="round" stroke-linejoin="round"><path d="M5 12h14"/><path d="m12 5 7 7-7 7"/></svg>
<svg class="ic" style="left:1202.20px;top:871.60px;width:16.0px;height:16.0px" viewBox="0 0 24 24" fill="none" stroke="#5b5fe6" stroke-width="2" stroke-linecap="round" stroke-linejoin="round"><rect width="20" height="8" x="2" y="2" rx="2" ry="2"/><rect width="20" height="8" x="2" y="14" rx="2" ry="2"/><line x1="6" x2="6.01" y1="6" y2="6"/><line x1="6" x2="6.01" y1="18" y2="18"/></svg>
<span class="t" id="t74" style="left:1228.10px;top:874.66px;font-size:11.5px;line-height:11.5px;font-weight:400;color:#374151;font-family:'Liberation Sans', sans-serif;letter-spacing:0.246px;-webkit-text-stroke:0.3px #374151;">Manage MCP Servers</span>
<svg class="ic" style="left:1704.30px;top:874.50px;width:12.0px;height:12.0px" viewBox="0 0 24 24" fill="none" stroke="#6b7280" stroke-width="1.6" stroke-linecap="round" stroke-linejoin="round"><path d="M5 12h14"/><path d="m12 5 7 7-7 7"/></svg>
<svg class="ic" style="left:1202.20px;top:913.10px;width:16.0px;height:16.0px" viewBox="0 0 24 24" fill="none" stroke="#46b05a" stroke-width="2" stroke-linecap="round" stroke-linejoin="round"><path d="M2.062 12.348a1 1 0 0 1 0-.696 10.75 10.75 0 0 1 19.876 0 1 1 0 0 1 0 .696 10.75 10.75 0 0 1-19.876 0"/><circle cx="12" cy="12" r="3"/></svg>
<span class="t" id="t75" style="left:1228.10px;top:915.66px;font-size:11.5px;line-height:11.5px;font-weight:400;color:#374151;font-family:'Liberation Sans', sans-serif;letter-spacing:0.116px;-webkit-text-stroke:0.3px #374151;">Review Requests</span>
<svg class="ic" style="left:1704.30px;top:915.50px;width:12.0px;height:12.0px" viewBox="0 0 24 24" fill="none" stroke="#6b7280" stroke-width="1.6" stroke-linecap="round" stroke-linejoin="round"><path d="M5 12h14"/><path d="m12 5 7 7-7 7"/></svg>
<svg class="ic" style="left:1202.20px;top:955.00px;width:16.0px;height:16.0px" viewBox="0 0 24 24" fill="none" stroke="#9b4fe8" stroke-width="2" stroke-linecap="round" stroke-linejoin="round"><path d="M20 13c0 5-3.5 7.5-7.66 8.95a1 1 0 0 1-.67-.01C7.5 20.5 4 18 4 13V6a1 1 0 0 1 1-1c2 0 4.5-1.2 6.24-2.72a1.17 1.17 0 0 1 1.520 0C14.51 3.810 17 5 19 5a1 1 0 0 1 1 1z"/><path d="m9 12 2 2 4-4"/></svg>
<span class="t" id="t76" style="left:1228.10px;top:957.56px;font-size:11.5px;line-height:11.5px;font-weight:400;color:#374151;font-family:'Liberation Sans', sans-serif;letter-spacing:0.248px;-webkit-text-stroke:0.3px #374151;">Compliance Reports</span>
<svg class="ic" style="left:1704.30px;top:957.40px;width:12.0px;height:12.0px" viewBox="0 0 24 24" fill="none" stroke="#6b7280" stroke-width="1.6" stroke-linecap="round" stroke-linejoin="round"><path d="M5 12h14"/><path d="m12 5 7 7-7 7"/></svg>
<svg class="ic" style="left:1773.20px;top:774.60px;width:16.6px;height:16.6px" viewBox="0 0 24 24" fill="none" stroke="#46b05a" stroke-width="2" stroke-linecap="round" stroke-linejoin="round"><path d="M16 21v-2a4 4 0 0 0-4-4H6a4 4 0 0 0-4 4v2"/><circle cx="9" cy="7" r="4"/><path d="M22 21v-2a4 4 0 0 0-3-3.87"/><path d="M16 3.13a4 4 0 0 1 0 7.75"/></svg>
<span class="t" id="t77" style="left:1795.60px;top:774.05px;font-size:15.3px;line-height:15.3px;font-weight:400;color:#111827;font-family:'Liberation Sans', sans-serif;letter-spacing:0.214px;-webkit-text-stroke:0.41px #111827;">Platform Summary</span>
<span class="t" id="t78" style="left:1773.50px;top:830.56px;font-size:11.5px;line-height:11.5px;font-weight:400;color:#4b5563;font-family:'Liberation Sans', sans-serif;letter-spacing:-0.103px;">Total Users</span>
<span class="t" id="t79" style="right:32.20px;top:829.69px;font-size:13.0px;line-height:13.0px;font-weight:700;color:#111827;font-family:'Liberation Sans', sans-serif;">5</span>
<div class="b" style="left:1773.50px;top:852.10px;width:533.30px;height:1.00px;background:#eceef1"></div>
<span class="t" id="t80" style="left:1773.50px;top:873.16px;font-size:11.5px;line-height:11.5px;font-weight:400;color:#4b5563;font-family:'Liberation Sans', sans-serif;letter-spacing:-0.077px;">Active Users</span>
<span class="t" id="t81" style="right:32.20px;top:872.29px;font-size:13.0px;line-height:13.0px;font-weight:700;color:#2f9e44;font-family:'Liberation Sans', sans-serif;">5</span>
<div class="b" style="left:1773.50px;top:894.70px;width:533.30px;height:1.00px;background:#eceef1"></div>
<span class="t" id="t82" style="left:1773.50px;top:916.46px;font-size:11.5px;line-height:11.5px;font-weight:400;color:#4b5563;font-family:'Liberation Sans', sans-serif;letter-spacing:0.086px;">Total Agents</span>
<span class="t" id="t83" style="right:32.20px;top:915.59px;font-size:13.0px;line-height:13.0px;font-weight:700;color:#111827;font-family:'Liberation Sans', sans-serif;">260</span>
<div class="b" style="left:1773.50px;top:938.00px;width:533.30px;height:1.00px;background:#eceef1"></div>
<span class="t" id="t84" style="left:1773.50px;top:958.56px;font-size:11.5px;line-height:11.5px;font-weight:400;color:#4b5563;font-family:'Liberation Sans', sans-serif;letter-spacing:-0.209px;">Total MCP Servers</span>
<span class="t" id="t85" style="right:32.20px;top:957.69px;font-size:13.0px;line-height:13.0px;font-weight:700;color:#111827;font-family:'Liberation Sans', sans-serif;">95</span>
<div class="b" style="left:1773.50px;top:980.10px;width:533.30px;height:1.00px;background:#eceef1"></div>
<span class="t" id="t86" style="left:1773.50px;top:1001.46px;font-size:11.5px;line-height:11.5px;font-weight:400;color:#4b5563;font-family:'Liberation Sans', sans-serif;letter-spacing:0.232px;">Security Incidents</span>
<span class="t" id="t87" style="right:32.20px;top:1000.59px;font-size:13.0px;line-height:13.0px;font-weight:700;color:#2f9e44;font-family:'Liberation Sans', sans-serif;">0</span>
<span class="t" id="t88" style="left:18.00px;top:1057.82px;font-size:21.0px;line-height:21.0px;font-weight:400;color:#111827;font-family:'Liberation Sans', sans-serif;letter-spacing:0.290px;-webkit-text-stroke:0.57px #111827;">Agent Activity Timeline</span>
<div class="b" style="left:2240.00px;top:1056.00px;width:81.00px;height:28.00px;background:#fff;border:1px solid #d9dce2;border-radius:5px"></div>
<svg class="ic" style="left:2250.60px;top:1063.60px;width:12.6px;height:12.6px" viewBox="0 0 24 24" fill="none" stroke="#1f2937" stroke-width="2" stroke-linecap="round" stroke-linejoin="round"><path d="M3 12a9 9 0 0 1 9-9 9.75 9.75 0 0 1 6.74 2.74L21 8"/><path d="M21 3v5h-5"/><path d="M21 12a9 9 0 0 1-9 9 9.75 9.75 0 0 1-6.74-2.74L3 16"/><path d="M8 16H3v5"/></svg>
<span class="t" id="t89" style="left:2269.80px;top:1064.34px;font-size:12.0px;line-height:12.0px;font-weight:400;color:#1f2937;font-family:'Liberation Sans', sans-serif;letter-spacing:-0.199px;-webkit-text-stroke:0.3px #1f2937;">Refresh</span>
<div class="b" style="left:17.00px;top:1104.00px;width:562.00px;height:82.00px;background:#fff;border:1px solid #e3e5ea;border-radius:6px;box-shadow:0 1px 2px rgba(16,24,40,0.05);"></div>
<svg class="ic" style="left:38.20px;top:1135.50px;width:18.6px;height:18.6px" viewBox="0 0 24 24" fill="none" stroke="#8b93a2" stroke-width="1.9" stroke-linecap="round" stroke-linejoin="round"><polyline points="22 12 18 12 15 21 9 3 6 12 2 12"/></svg>
<span class="t" id="t90" style="left:72.40px;top:1126.92px;font-size:11.2px;line-height:11.2px;font-weight:400;color:#6b7280;font-family:'Liberation Sans', sans-serif;letter-spacing:0.581px;">Total Activities</span>
<span class="t" id="t91" style="left:72.40px;top:1142.77px;font-size:19.4px;line-height:19.4px;font-weight:400;color:#111827;font-family:'Liberation Sans', sans-serif;transform:scaleX(0.9792);transform-origin:left center;-webkit-text-stroke:0.55px #111827;">10</span>
<div class="b" style="left:598.00px;top:1104.00px;width:562.00px;height:82.00px;background:#fff;border:1px solid #e3e5ea;border-radius:6px;box-shadow:0 1px 2px rgba(16,24,40,0.05);"></div>
<svg class="ic" style="left:617.60px;top:1135.00px;width:19.2px;height:19.2px" viewBox="0 0 24 24" fill="none" stroke="#2f9e44" stroke-width="2" stroke-linecap="round" stroke-linejoin="round"><path d="M21.801 10A10 10 0 1 1 17 3.335"/><path d="m9 11 3 3L22 4"/></svg>
<span class="t" id="t92" style="left:653.40px;top:1126.92px;font-size:11.2px;line-height:11.2px;font-weight:400;color:#6b7280;font-family:'Liberation Sans', sans-serif;letter-spacing:0.575px;">Successful</span>
<span class="t" id="t93" style="left:653.40px;top:1142.77px;font-size:19.4px;line-height:19.4px;font-weight:400;color:#2f9e44;font-family:'Liberation Sans', sans-serif;-webkit-text-stroke:0.55px #2f9e44;">9</span>
<div class="b" style="left:1179.00px;top:1104.00px;width:562.00px;height:82.00px;background:#fff;border:1px solid #e3e5ea;border-radius:6px;box-shadow:0 1px 2px rgba(16,24,40,0.05);"></div>
<svg class="ic" style="left:1198.60px;top:1135.00px;width:19.2px;height:19.2px" viewBox="0 0 24 24" fill="none" stroke="#c53030" stroke-width="2" stroke-linecap="round" stroke-linejoin="round"><circle cx="12" cy="12" r="10"/><path d="m15 9-6 6"/><path d="m9 9 6 6"/></svg>
<span class="t" id="t94" style="left:1234.40px;top:1126.92px;font-size:11.2px;line-height:11.2px;font-weight:400;color:#6b7280;font-family:'Liberation Sans', sans-serif;letter-spacing:0.360px;">Failed</span>
<span class="t" id="t95" style="left:1234.40px;top:1142.77px;font-size:19.4px;line-height:19.4px;font-weight:400;color:#c53030;font-family:'Liberation Sans', sans-serif;-webkit-text-stroke:0.55px #c53030;">1</span>
<div class="b" style="left:1760.00px;top:1104.00px;width:561.00px;height:82.00px;background:#fff;border:1px solid #e3e5ea;border-radius:6px;box-shadow:0 1px 2px rgba(16,24,40,0.05);"></div>
<svg class="ic" style="left:1779.60px;top:1135.00px;width:19.2px;height:19.2px" viewBox="0 0 24 24" fill="none" stroke="#8b93a2" stroke-width="2" stroke-linecap="round" stroke-linejoin="round"><polyline points="22 7 13.5 15.5 8.5 10.5 2 17"/><polyline points="16 7 22 7 22 13"/></svg>
<span class="t" id="t96" style="left:1815.40px;top:1126.92px;font-size:11.2px;line-height:11.2px;font-weight:400;color:#6b7280;font-family:'Liberation Sans', sans-serif;letter-spacing:0.296px;">Success Rate</span>
<span class="t" id="t97" style="left:1815.40px;top:1142.77px;font-size:19.4px;line-height:19.4px;font-weight:400;color:#111827;font-family:'Liberation Sans', sans-serif;transform:scaleX(1.1244);transform-origin:left center;-webkit-text-stroke:0.55px #111827;">90.0%</span>
</div></body></html>
